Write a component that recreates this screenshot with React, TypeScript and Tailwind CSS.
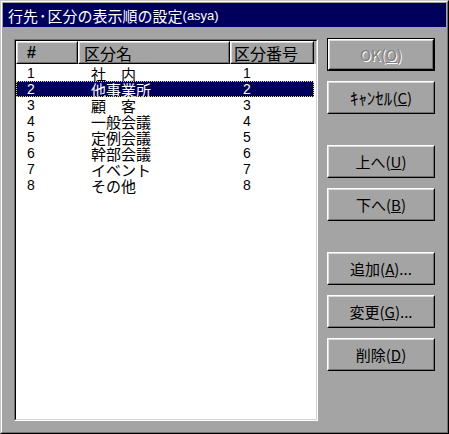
import type { ReactNode } from "react";

const ROWS: [string, string, string][] = [
  ["1", "社　内", "1"],
  ["2", "他事業所", "2"],
  ["3", "顧　客", "3"],
  ["4", "一般会議", "4"],
  ["5", "定例会議", "5"],
  ["6", "幹部会議", "6"],
  ["7", "イベント", "7"],
  ["8", "その他", "8"],
];

const JP = "font-['Noto_Sans_CJK_JP',sans-serif]";
const NUM = "font-['Liberation_Sans','Noto_Sans_CJK_JP',sans-serif]";

function Btn({
  children,
  isDefault = false,
  disabled = false,
  className = "",
}: {
  children: ReactNode;
  isDefault?: boolean;
  disabled?: boolean;
  className?: string;
}) {
  return (
    <div className={`w-[108px] h-[33px] ${isDefault ? "border border-black" : ""} ${className}`}>
      <div className="h-full border border-t-white border-l-white border-r-black border-b-black">
        <div
          className={`h-full flex items-center justify-center border border-t-[#dcdcdc] border-l-[#dcdcdc] border-r-[#707070] border-b-[#707070] text-[15px] leading-none ${JP} ${
            disabled ? "text-[#808080] [text-shadow:1px_1px_0_#fff]" : "text-black"
          }`}
        >
          {children}
        </div>
      </div>
    </div>
  );
}

function HeadCell({ w, pl, children }: { w: string; pl: string; children: ReactNode }) {
  return (
    <div className={`${w} h-full border border-t-white border-l-white border-r-black border-b-black`}>
      <div
        className={`h-full flex items-center ${pl} border border-t-[#dcdcdc] border-l-[#dcdcdc] border-r-[#707070] border-b-[#707070] text-[16px] leading-none ${JP}`}
      >
        {children}
      </div>
    </div>
  );
}

export default function App() {
  return (
    <div className="w-[449px] h-[434px] bg-[#a4a4a4] border border-t-[#c8c8c8] border-l-[#c8c8c8] border-r-black border-b-black">
      <div className="h-full border border-t-white border-l-white border-r-[#707070] border-b-[#707070] p-px flex flex-col">
        <div className={`h-[24px] bg-[#00005c] text-white flex items-center pl-[5px] text-[15px] leading-none ${JP}`}>
          行先<span className="mx-[1px]">･</span>区分の表示順の設定
          <span className="font-['Liberation_Sans',sans-serif] text-[13px]">(asya)</span>
        </div>

        <div className="flex mt-[12px]">
          {/* list view */}
          <div className="ml-[11px] w-[304px] h-[382px] border border-t-[#707070] border-l-[#707070] border-r-white border-b-white">
            <div className="h-full border border-t-black border-l-black border-r-[#d4d4d4] border-b-[#d4d4d4] bg-white flex flex-col">
              <div className="flex h-[23px] bg-[#a4a4a4]">
                <HeadCell w="w-[62px]" pl="pl-[9px]">
                  <span className={`${NUM} text-[16px] font-bold`}>#</span>
                </HeadCell>
                <HeadCell w="w-[152px]" pl="pl-[4px]">区分名</HeadCell>
                <HeadCell w="w-[84px]" pl="pl-[2px]">区分番号</HeadCell>
              </div>
              <div className="flex flex-col pt-px">
                {ROWS.map(([n, name, code], i) => {
                  const sel = i === 1;
                  return (
                    <div
                      key={n}
                      className={`flex h-[16px] w-[298px] items-center ${
                        sel
                          ? "bg-[#00005c] text-white outline outline-1 outline-dotted outline-[#d8d870] -outline-offset-1"
                          : "text-black"
                      }`}
                    >
                      <span className={`w-[62px] pl-[11px] text-[14px] leading-[15px] ${NUM}`}>{n}</span>
                      <span className={`w-[152px] pl-[13px] text-[15px] leading-[15px] ${JP}`}>{name}</span>
                      <span className={`w-[84px] pl-[13px] text-[14px] leading-[15px] ${NUM}`}>{code}</span>
                    </div>
                  );
                })}
              </div>
            </div>
          </div>

          {/* buttons */}
          <div className="ml-[9px] flex flex-col -mt-px">
            <Btn isDefault disabled>
              OK(<u>O</u>)
            </Btn>
            <Btn className="mt-[10px]">
              <span className="text-[17px]">ｷｬﾝｾﾙ</span>(<u>C</u>)
            </Btn>
            <Btn className="mt-[31px]">
              上へ(<u>U</u>)
            </Btn>
            <Btn className="mt-[10px]">
              下へ(<u>B</u>)
            </Btn>
            <Btn className="mt-[31px]">
              追加(<u>A</u>)...
            </Btn>
            <Btn className="mt-[10px]">
              変更(<u>G</u>)...
            </Btn>
            <Btn className="mt-[10px]">
              削除(<u>D</u>)
            </Btn>
          </div>
        </div>
      </div>
    </div>
  );
}
